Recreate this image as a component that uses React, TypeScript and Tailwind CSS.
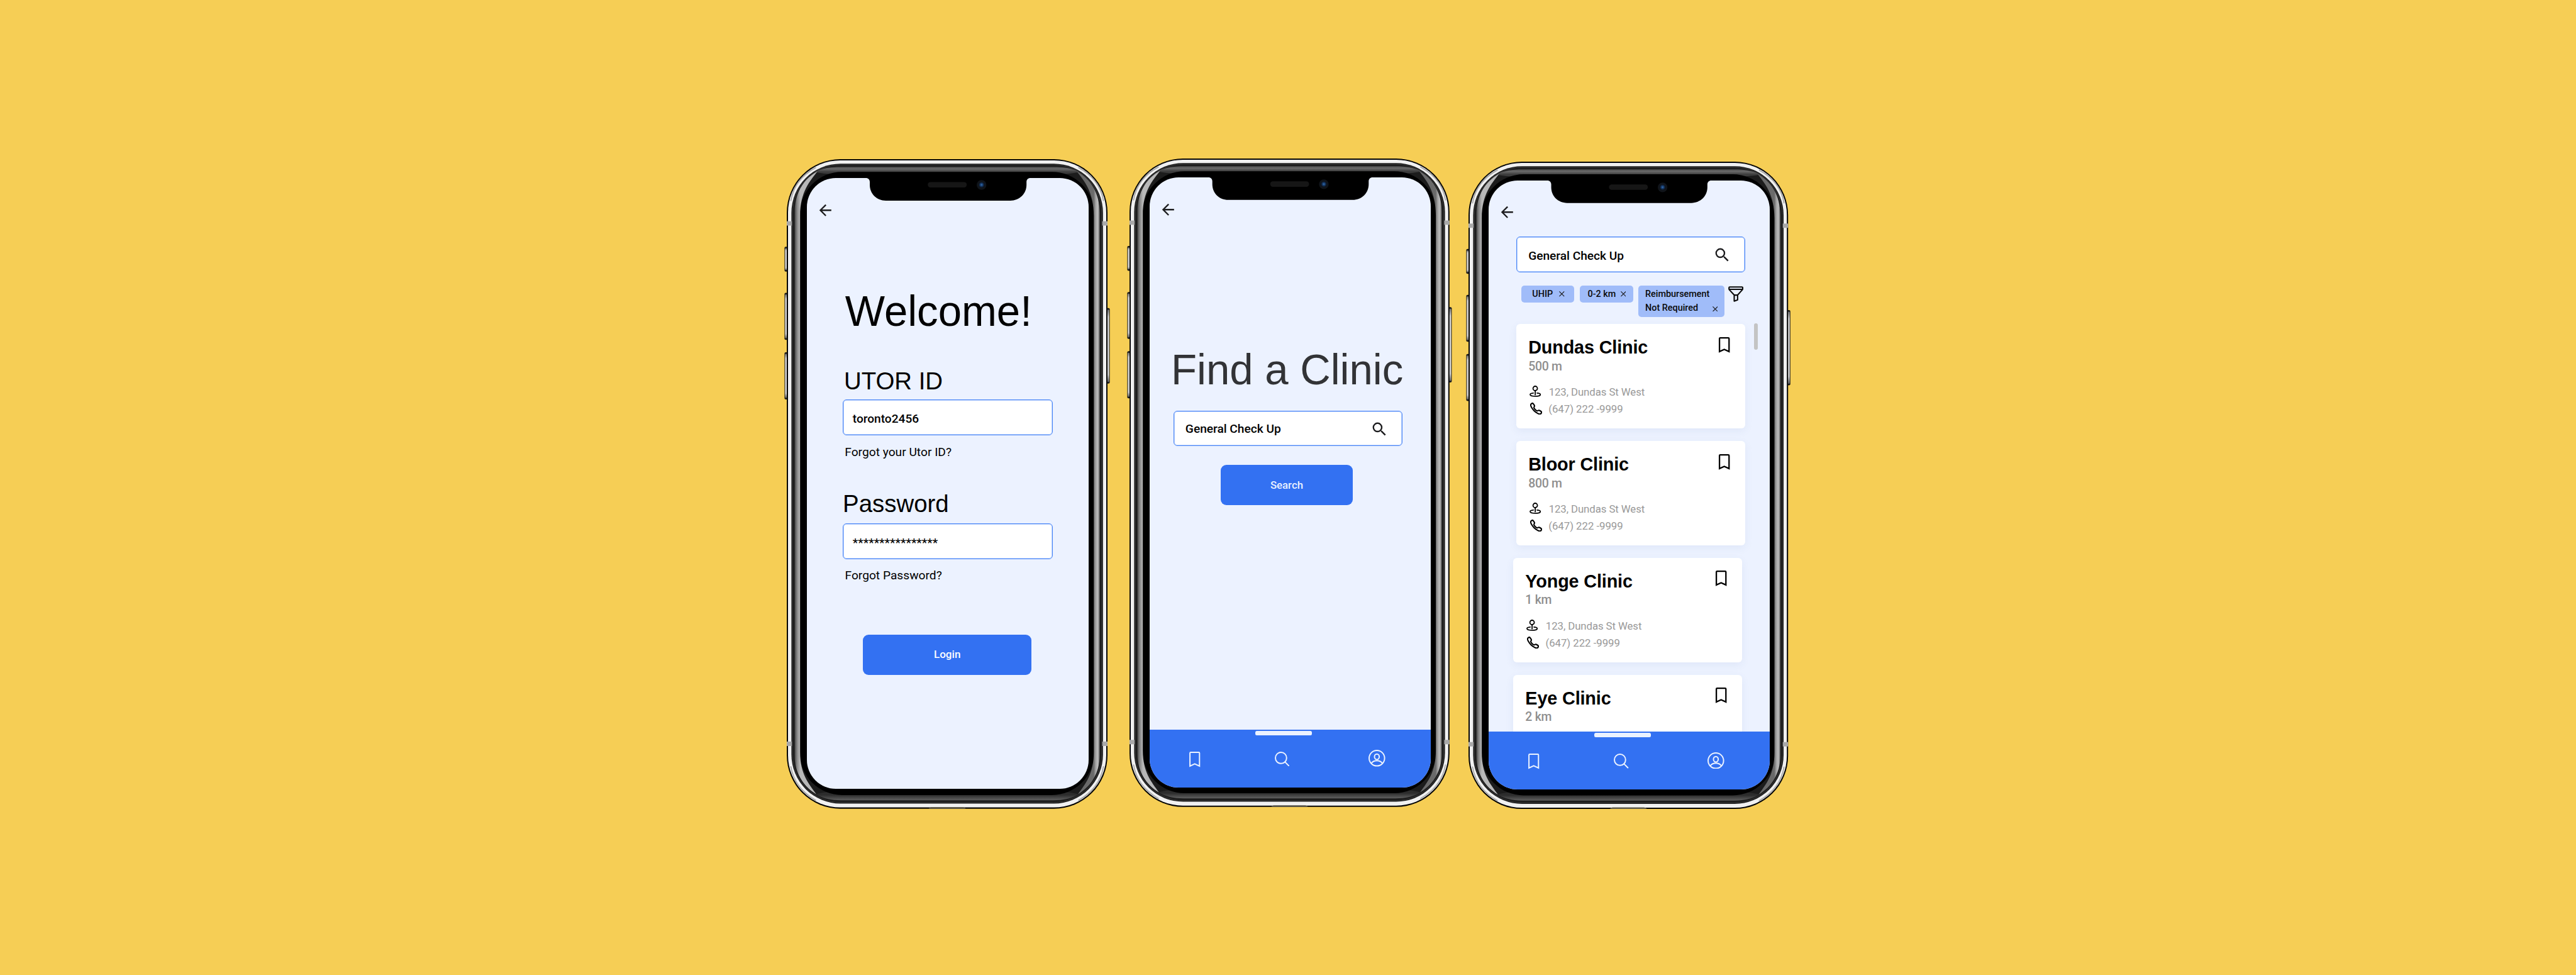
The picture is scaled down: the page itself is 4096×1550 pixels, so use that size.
import type { ReactNode } from "react";
import { MdArrowBack, MdSearch } from "react-icons/md";

const ARIAL = "font-['Liberation_Sans',sans-serif] leading-none whitespace-nowrap";
const ROBOTO = "font-['Roboto',sans-serif] leading-none whitespace-nowrap";
const FIELD = "rounded-[6px] border border-[#4a86f7] bg-white shadow-[inset_0_0_0_1px_rgba(74,134,247,0.4)]";

/* ---------- device body ---------- */

function SideButton({ x, y, w, h }: { x: number; y: number; w: number; h: number }) {
  return (
    <g>
      <rect x={x} y={y} width={w} height={h} rx="2" fill="#1b1b1b" />
      <rect x={x + 1} y={y + 2.5} width={w} height={h - 5} rx="1" fill="url(#btn)" />
    </g>
  );
}

function DeviceBody() {
  return (
    <svg className="absolute inset-0 h-full w-full overflow-visible" viewBox="0 0 510 1033" preserveAspectRatio="none">
      <defs>
        <linearGradient id="btn" x1="0" y1="0" x2="0" y2="1">
          <stop offset="0" stopColor="#777" />
          <stop offset="0.1" stopColor="#d6d6d6" />
          <stop offset="0.9" stopColor="#d6d6d6" />
          <stop offset="1" stopColor="#666" />
        </linearGradient>
        <linearGradient id="sheenL" x1="12" y1="0" x2="21.3" y2="0" gradientUnits="userSpaceOnUse">
          <stop offset="0" stopColor="#3c3c3c" />
          <stop offset="0.45" stopColor="#848484" />
          <stop offset="1" stopColor="#b8b8b8" />
        </linearGradient>
        <linearGradient id="sheenR" x1="498" y1="0" x2="488" y2="0" gradientUnits="userSpaceOnUse">
          <stop offset="0" stopColor="#5a5a5a" />
          <stop offset="0.35" stopColor="#bcbcbc" />
          <stop offset="0.65" stopColor="#a6a6a6" />
          <stop offset="1" stopColor="#6a6a6a" />
        </linearGradient>
        <linearGradient id="bandT" x1="0" y1="12" x2="0" y2="20.5" gradientUnits="userSpaceOnUse">
          <stop offset="0" stopColor="#4a4a4a" />
          <stop offset="0.4" stopColor="#6a6a6a" />
          <stop offset="1" stopColor="#3c3c3c" />
        </linearGradient>
        <linearGradient id="bandB" x1="0" y1="1011" x2="0" y2="1020" gradientUnits="userSpaceOnUse">
          <stop offset="0" stopColor="#2c2c2c" />
          <stop offset="1" stopColor="#626262" />
        </linearGradient>
        <radialGradient id="cam">
          <stop offset="0" stopColor="#3a72ae" />
          <stop offset="0.5" stopColor="#153a6c" />
          <stop offset="1" stopColor="#0c1420" />
        </radialGradient>
      </defs>

      <SideButton x={-3.6} y={139.4} w={6} h={39.5} />
      <SideButton x={-3.6} y={212.6} w={6} h={74.8} />
      <SideButton x={-3.6} y={307} w={6} h={75} />
      <g transform="translate(510 0) scale(-1 1)">
        <SideButton x={-3.6} y={236.8} w={6} h={120} />
      </g>

      <rect width="510" height="1033" rx="85" ry="85" fill="#050505" />
      <rect x="2" y="1.9" width="506" height="1029" rx="83" ry="83" fill="#f1f1f1" />
      {/* shaded corners of the steel rim */}
      <g fill="none" stroke="#6f6f6f" strokeWidth="1.6" strokeLinecap="round" opacity="0.6">
        <path d="M6.5 66C10 45 23 26 46 13.5" />
        <path d="M503.5 66C500 45 487 26 464 13.5" />
        <path d="M6.5 966C10 987 23 1006.5 46 1019.5" />
        <path d="M503.5 966C500 987 487 1006.5 464 1019.5" />
      </g>
      <rect x="7.4" y="7.2" width="495.4" height="1017.6" rx="78" ry="78" fill="#1c1c1c" />
      <rect x="9.3" y="9" width="491.4" height="1014" rx="76" ry="76" fill="none" stroke="#3a3a3a" strokeWidth="1" />
      {/* top and bottom glass bands */}
      <path d="M44 20.5C57 14.5 70 12.3 86 12.3H424C440 12.3 453 14.5 466 20.5C455 23 438 24 420 24H90C72 24 55 23 44 20.5Z" fill="url(#bandT)" />
      <path d="M46 1010C58 1016.5 70 1019.5 86 1019.5H424C440 1019.5 453 1016.5 464 1010C450 1006 438 1006 424 1006H86C70 1006 58 1006 46 1010Z" fill="url(#bandB)" />
      <rect x="20.8" y="20.2" width="468" height="991" rx="67" ry="67" fill="#000" />
      {/* side sheens */}
      <path d="M12.5 85C12.5 54 27 31 48.6 19.5C37 35 21.2 52 21.2 90V943C21.2 978 35 993 47 1010C27 998 12.5 977 12.5 948Z" fill="url(#sheenL)" />
      <path d="M497.6 85C497.6 54 483 31 461.4 19.5C473 35 488.2 52 488.2 90V943C488.2 978 475 993 463 1010C483 998 497.6 977 497.6 948Z" fill="url(#sheenR)" />
      {/* antenna lines */}
      <g fill="#a9a9a9">
        <rect x="0" y="98.8" width="8.2" height="6.8" />
        <rect x="501.6" y="98.8" width="8.4" height="6.8" />
        <rect x="0" y="926.2" width="8.2" height="7" />
        <rect x="501.6" y="926.2" width="8.4" height="7" />
      </g>
      <path d="M225.6 1033C227 1030.8 229 1030.4 232 1030.4H278C281 1030.4 283 1030.8 284.8 1033Z" fill="#5d5a4c" />
    </svg>
  );
}

function Notch() {
  return (
    <svg className="pointer-events-none absolute inset-0 h-full w-full" viewBox="0 0 510 1033" preserveAspectRatio="none">
      <path
        d="M120 28H393V30H387.6C383.5 30 381.2 32.5 381.2 36.5V41C381.2 55 370 65.9 355.5 65.9H157.5C143 65.9 132 55 132 41V36.5C132 32.5 129.7 30 125.6 30H120Z"
        fill="#000"
      />
      <rect x="224.2" y="36.4" width="62" height="8.6" rx="4.2" fill="#161616" />
      <circle cx="309.7" cy="41" r="7.7" fill="#10141a" />
      <circle cx="309.7" cy="40.8" r="4.4" fill="url(#cam)" />
    </svg>
  );
}

function Phone({ className, screenClass, children }: { className: string; screenClass: string; children: ReactNode }) {
  return (
    <section className={`relative shrink-0 ${className}`}>
      <DeviceBody />
      <div className={`relative flex flex-col items-start overflow-hidden rounded-[46px] bg-[#ecf2ff] ${screenClass}`}>{children}</div>
      <Notch />
    </section>
  );
}

/* ---------- icons ---------- */

function BookmarkIcon({ stroke, className }: { stroke: number; className?: string }) {
  return (
    <svg className={`h-[24.8px] w-[17.4px] shrink-0 overflow-visible ${className ?? ""}`} viewBox="0 0 17.4 24.8" fill="none" stroke="currentColor" strokeWidth={stroke}>
      <path d="M1.1 22.9V2.3Q1.1 1.1 2.3 1.1H15.1Q16.3 1.1 16.3 2.3V22.9L8.7 19.4Z" />
    </svg>
  );
}

function NavSearchIcon() {
  return (
    <svg className="mt-[2.4px] ml-[118.9px] size-[23.6px] shrink-0" viewBox="0 0 23.6 23.6" fill="none" stroke="currentColor" strokeWidth="2" strokeLinecap="round">
      <circle cx="9.9" cy="9.9" r="8.9" />
      <path d="M16.3 16.4L22.4 22.5" />
    </svg>
  );
}

function ProfileIcon() {
  return (
    <svg className="ml-[125.7px] size-[26.6px] shrink-0" viewBox="0 0 26.6 26.6" fill="none" stroke="currentColor" strokeWidth="2">
      <circle cx="13.3" cy="13.3" r="12.3" />
      <ellipse cx="13.3" cy="11.1" rx="3.8" ry="4.4" />
      <path d="M4.6 21.3C6.6 18.6 9.8 17.3 13.3 17.3S20 18.6 22 21.3" />
    </svg>
  );
}

function PinIcon() {
  return (
    <svg className="h-[18px] w-[18.4px]" viewBox="0 0 18.4 18" fill="none" stroke="currentColor" strokeWidth="1.8" strokeLinecap="round">
      <circle cx="9.1" cy="4.5" r="3.5" />
      <path d="M9.1 8.2V14.4" />
      <path d="M6.2 11.8C2.8 12.1 1 13.1 1 14.2C1 15.8 4.6 16.9 9.1 16.9S17.3 15.8 17.3 14.2C17.3 13.1 15.4 12.1 12 11.8" />
    </svg>
  );
}

function PhoneIcon() {
  return (
    <svg className="size-[19.3px]" viewBox="26 26 460 460" fill="none" stroke="currentColor" strokeWidth="50" strokeLinejoin="round">
      <path d="M451 374c-15.88-16-54.34-39.35-73-48.76-24.3-12.24-26.3-13.24-45.4.95-12.74 9.47-21.21 17.93-36.12 14.75s-47.31-21.11-75.68-49.39-47.34-61.62-50.53-76.48 5.41-23.23 14.79-36c13.22-18 12.22-21 .92-45.3-8.81-18.9-32.84-57-48.9-72.8C119.9 44 119.9 47 108.83 51.6A160.15 160.15 0 0083 65.37C67 76 58.12 84.83 51.91 98.1s-9 44.38 23.07 102.64 54.57 88.05 101.14 134.49S258.5 406.64 310.85 436c64.76 36.27 89.6 29.2 102.91 23s22.18-15 32.83-31a159.09 159.09 0 0013.8-25.8C465 391.17 468 391.17 451 374z" />
    </svg>
  );
}

function FunnelIcon() {
  return (
    <svg className="mt-[1.2px] ml-[6px] h-[24.8px] w-[24.2px] shrink-0" viewBox="0 0 24.2 24.8" fill="none" stroke="#0a0a0a" strokeWidth="2.1" strokeLinejoin="round">
      <path d="M1.2 2.4Q1.2 1.2 2.4 1.2H21.8Q23 1.2 23 2.4V4.3Q23 5 22.5 5.6L14.9 14V21.8L9.5 23.7V14L1.7 5.6Q1.2 5 1.2 4.3Z" />
      <path d="M1.6 5H22.6M9.5 14.1H14.9" />
    </svg>
  );
}

function CloseIcon({ className }: { className?: string }) {
  return (
    <svg className={`size-[8.6px] shrink-0 ${className ?? ""}`} viewBox="0 0 8.6 8.6" stroke="#1d1d1f" strokeWidth="1.2">
      <path d="M.4.4L8.2 8.2M8.2.4L.4 8.2" />
    </svg>
  );
}

/* ---------- shared pieces ---------- */

function BackArrow({ className }: { className: string }) {
  return <MdArrowBack className={`ml-[15.5px] size-[28.6px] shrink-0 text-[#1d1d1f] ${className}`} />;
}

function SearchField({ className, textClass }: { className: string; textClass: string }) {
  return (
    <div className={`flex shrink-0 items-center justify-between pr-[21.4px] pl-[18.2px] ${FIELD} ${className}`}>
      <span className={`${ROBOTO} text-[19.2px] font-medium tracking-[-0.03px] text-black ${textClass}`}>General Check Up</span>
      <MdSearch className="mt-[2px] size-[28.8px] text-[#1d1d1f]" />
    </div>
  );
}

function NavBar({ className }: { className: string }) {
  return (
    <nav className={`absolute inset-x-0 bottom-0 flex items-start bg-[#3371f2] pt-[32.6px] pl-[62.7px] text-[#ebf2ff] ${className}`}>
      <span className="absolute top-[2.5px] left-[168px] h-[7px] w-[89.8px] rounded-[2.5px] bg-[#ebf2ff]" />
      <BookmarkIcon stroke={2} className="mt-[2.2px]" />
      <NavSearchIcon />
      <ProfileIcon />
    </nav>
  );
}

function ClinicCard({ name, distance, shifted }: { name: string; distance: string; shifted?: boolean }) {
  return (
    <article
      className={`flex h-[166px] w-[363.8px] shrink-0 justify-between rounded-[6px] bg-white pr-[24.6px] pl-[19.2px] shadow-[0_4px_14px_rgba(60,80,150,0.07)] ${
        shifted ? "-ml-[4.8px]" : ""
      }`}
    >
      <div className="flex flex-col items-start pt-[23px]">
        <h2 className={`${ARIAL} text-[28.8px] font-bold tracking-[-0.15px] text-black`}>{name}</h2>
        <p className={`${ROBOTO} mt-[6px] text-[19.4px] font-medium tracking-[-0.25px] text-[#8e8e8e]`}>{distance}</p>
        <div className="mt-[21.4px] flex h-[18px] items-center">
          <span className="flex w-[32.5px] pl-[1.6px] text-black">
            <PinIcon />
          </span>
          <span className={`${ROBOTO} mt-[2px] text-[16.8px] tracking-[-0.08px] text-[#999]`}>123, Dundas St West</span>
        </div>
        <div className="mt-[8.6px] flex h-[19.2px] items-center">
          <span className="flex w-[32.1px] pl-[2.4px] text-black">
            <PhoneIcon />
          </span>
          <span className={`${ROBOTO} mt-[1.5px] text-[16.8px] tracking-[-0.03px] text-[#999]`}>(647) 222 -9999</span>
        </div>
      </div>
      <BookmarkIcon stroke={2.3} className="mt-[20.8px] text-black" />
    </article>
  );
}

/* ---------- screens ---------- */

function LoginScreen() {
  return (
    <>
      <BackArrow className="mt-[37.2px]" />
      <h1 className={`${ARIAL} mt-[112.6px] ml-[60.9px] origin-[0_84.6%] scale-y-[1.03] text-[67.1px] text-black`}>Welcome!</h1>
      <label className={`${ARIAL} mt-[58.6px] ml-[59.1px] text-[38.4px] text-black`}>UTOR ID</label>
      <div className={`mt-[9.2px] ml-[57.1px] flex h-[57.5px] w-[334px] shrink-0 items-center pt-[4px] pl-[14.8px] ${FIELD}`}>
        <span className={`${ROBOTO} text-[19.1px] font-medium text-black`}>toronto2456</span>
      </div>
      <a className={`${ROBOTO} mt-[16.4px] ml-[60.4px] text-[19.2px] text-black`}>Forgot your Utor ID?</a>
      <label className={`${ARIAL} mt-[54.1px] ml-[57.2px] text-[38.4px] text-black`}>Password</label>
      <div className={`mt-[12.1px] ml-[57.1px] flex h-[57px] w-[334px] shrink-0 items-center pt-[4px] pl-[14.8px] ${FIELD}`}>
        <span className={`${ROBOTO} text-[19.1px] font-medium text-black`}>****************</span>
      </div>
      <a className={`${ROBOTO} mt-[15.8px] ml-[60.6px] text-[19.2px] text-black`}>Forgot Password?</a>
      <button className={`${ROBOTO} mt-[84.6px] ml-[89.4px] flex h-[63.5px] w-[267.8px] shrink-0 items-center justify-center rounded-[9px] bg-[#3371f2] text-[17.1px] font-medium text-white`}>
        Login
      </button>
    </>
  );
}

function FindScreen() {
  return (
    <>
      <BackArrow className="mt-[36.9px]" />
      <h1 className={`${ARIAL} mt-[205.8px] ml-[34.2px] origin-[0_84.6%] scale-y-[1.02] text-[67.1px] text-[#323336]`}>Find a Clinic</h1>
      <SearchField className="mt-[31.9px] ml-[37.8px] h-[56.6px] w-[364.1px]" textClass="mt-[1px]" />
      <button className={`${ROBOTO} mt-[30.2px] ml-[112.9px] flex h-[63.5px] w-[210.4px] shrink-0 items-center justify-center rounded-[9px] bg-[#3371f2] text-[16.8px] font-medium text-[#ebf2ff]`}>
        Search
      </button>
      <NavBar className="h-[91.9px]" />
    </>
  );
}

const CHIP = "flex shrink-0 rounded-[5px] bg-[#a0bcf9]";
const CHIP_TEXT = "font-['Roboto',sans-serif] text-[14.4px] font-medium whitespace-nowrap text-[#0a0a0a]";

function ResultsScreen() {
  return (
    <>
      <BackArrow className="mt-[36.1px]" />
      <SearchField className="mt-[24px] ml-[44px] h-[57.1px] w-[363.8px]" textClass="mt-[4px]" />
      <div className="mt-[20.5px] ml-[52.4px] flex h-[50.1px] shrink-0 items-start">
        <div className={`${CHIP} h-[27.3px] w-[84.1px] items-center justify-between pr-[15.9px] pl-[17px]`}>
          <span className={`${CHIP_TEXT} mt-[1px] leading-none`}>UHIP</span>
          <CloseIcon />
        </div>
        <div className={`${CHIP} ml-[8.7px] h-[27.3px] w-[84.9px] items-center justify-between pr-[11.8px] pl-[12.4px]`}>
          <span className={`${CHIP_TEXT} mt-[1px] leading-none`}>0-2 km</span>
          <CloseIcon />
        </div>
        <div className={`${CHIP} ml-[8.3px] h-[50.1px] w-[136.9px] items-end justify-between pr-[10.8px] pb-[3.4px] pl-[10.7px]`}>
          <span className={`${CHIP_TEXT} -mr-4 leading-[21.6px]`}>
            Reimbursement
            <br />
            Not Required
          </span>
          <CloseIcon className="mb-[5.2px]" />
        </div>
        <FunnelIcon />
      </div>
      <div className="mt-[11.1px] ml-[44px] flex flex-col gap-[19.9px]">
        <ClinicCard name="Dundas Clinic" distance="500 m" />
        <ClinicCard name="Bloor Clinic" distance="800 m" />
        <ClinicCard name="Yonge Clinic" distance="1 km" shifted />
        <ClinicCard name="Eye Clinic" distance="2 km" shifted />
      </div>
      <span className="absolute top-[227.1px] left-[421.7px] h-[42px] w-[6.3px] rounded-full bg-[#c4c4c4]" />
      <NavBar className="h-[92.5px]" />
    </>
  );
}

export default function App() {
  return (
    <main className="flex h-[1550px] w-[4096px] items-start overflow-hidden bg-[#f6ce55] pl-[1250.7px]">
      <Phone className="mt-[253.2px] h-[1032.7px] w-[510px] pt-[29.9px] pl-[32.2px]" screenClass="h-[971.4px] w-[448px]">
        <LoginScreen />
      </Phone>
      <Phone className="mt-[252.3px] ml-[35.3px] h-[1030.8px] w-[508.8px] pt-[30.1px] pl-[31.9px]" screenClass="h-[969.3px] w-[447.3px]">
        <FindScreen />
      </Phone>
      <Phone className="mt-[256.8px] ml-[30.4px] h-[1029.1px] w-[508.2px] pt-[30.6px] pl-[31.8px]" screenClass="h-[968.1px] w-[447px]">
        <ResultsScreen />
      </Phone>
    </main>
  );
}
